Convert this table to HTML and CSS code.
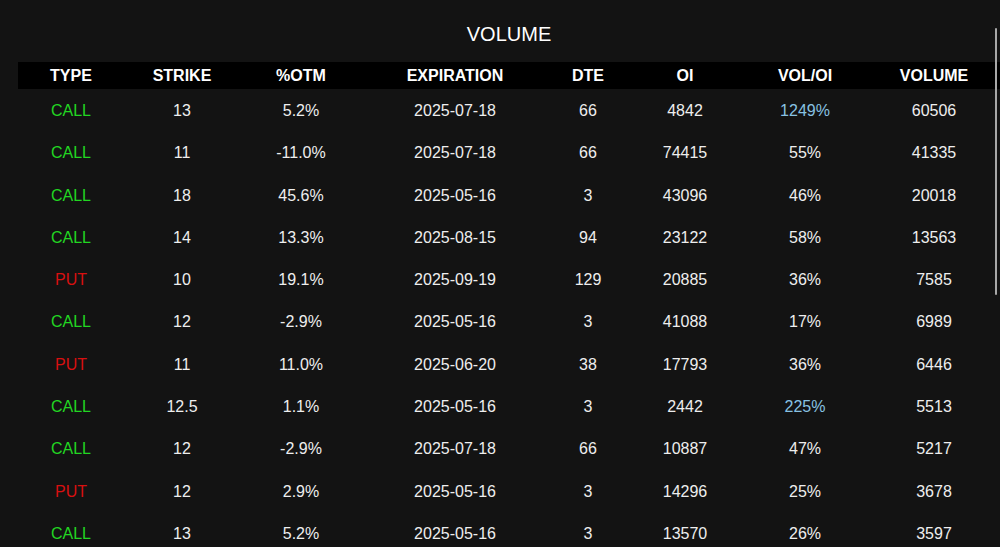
FILE: index.html
```html
<!DOCTYPE html>
<html>
<head>
<meta charset="utf-8">
<link rel="stylesheet" href="styles.css">
</head>
<body>
<div class="panel">
  <div class="title">VOLUME</div>
  <table class="grid">
    <colgroup>
      <col class="c-type"><col class="c-strike"><col class="c-otm"><col class="c-exp">
      <col class="c-dte"><col class="c-oi"><col class="c-ratio"><col class="c-vol">
    </colgroup>
    <thead>
      <tr><th>TYPE</th><th>STRIKE</th><th>%OTM</th><th>EXPIRATION</th><th>DTE</th><th>OI</th><th>VOL/OI</th><th>VOLUME</th></tr>
    </thead>
    <tbody>
      <tr><td class="call">CALL</td><td>13</td><td>5.2%</td><td>2025-07-18</td><td>66</td><td>4842</td><td class="hot">1249%</td><td>60506</td></tr>
      <tr><td class="call">CALL</td><td>11</td><td>-11.0%</td><td>2025-07-18</td><td>66</td><td>74415</td><td>55%</td><td>41335</td></tr>
      <tr><td class="call">CALL</td><td>18</td><td>45.6%</td><td>2025-05-16</td><td>3</td><td>43096</td><td>46%</td><td>20018</td></tr>
      <tr><td class="call">CALL</td><td>14</td><td>13.3%</td><td>2025-08-15</td><td>94</td><td>23122</td><td>58%</td><td>13563</td></tr>
      <tr><td class="put">PUT</td><td>10</td><td>19.1%</td><td>2025-09-19</td><td>129</td><td>20885</td><td>36%</td><td>7585</td></tr>
      <tr><td class="call">CALL</td><td>12</td><td>-2.9%</td><td>2025-05-16</td><td>3</td><td>41088</td><td>17%</td><td>6989</td></tr>
      <tr><td class="put">PUT</td><td>11</td><td>11.0%</td><td>2025-06-20</td><td>38</td><td>17793</td><td>36%</td><td>6446</td></tr>
      <tr><td class="call">CALL</td><td>12.5</td><td>1.1%</td><td>2025-05-16</td><td>3</td><td>2442</td><td class="hot">225%</td><td>5513</td></tr>
      <tr><td class="call">CALL</td><td>12</td><td>-2.9%</td><td>2025-07-18</td><td>66</td><td>10887</td><td>47%</td><td>5217</td></tr>
      <tr><td class="put">PUT</td><td>12</td><td>2.9%</td><td>2025-05-16</td><td>3</td><td>14296</td><td>25%</td><td>3678</td></tr>
      <tr><td class="call">CALL</td><td>13</td><td>5.2%</td><td>2025-05-16</td><td>3</td><td>13570</td><td>26%</td><td>3597</td></tr>
    </tbody>
  </table>
</div>
<div class="scroll-thumb"></div>
</body>
</html>
```
FILE: styles.css
```css
html, body {
  margin: 0;
  padding: 0;
  background: #131313;
  overflow: hidden;
  height: 547px;
}
body {
  font-family: "Liberation Sans", Arial, sans-serif;
  color: #eeeeee;
}
.panel {
  padding-left: 18px;
}
.title {
  text-align: center;
  font-size: 20px;
  line-height: 23px;
  padding-top: 23px;
  padding-bottom: 16px;
  color: #ffffff;
}
.grid {
  width: 982px;
  border-collapse: collapse;
  table-layout: fixed;
}
.c-type { width: 106px; }
.c-strike { width: 116px; }
.c-otm { width: 122px; }
.c-exp { width: 186px; }
.c-dte { width: 80px; }
.c-oi { width: 114px; }
.c-ratio { width: 126px; }
.c-vol { width: 132px; }
.grid th {
  background: #000000;
  color: #ffffff;
  font-weight: bold;
  font-size: 16px;
  height: 27px;
  padding: 0;
  text-align: center;
}
.grid td {
  font-size: 16px;
  line-height: 18px;
  padding: 13px 0 11.3px;
  text-align: center;
  color: #eeeeee;
}
.grid td.call { color: #22d622; }
.grid td.put { color: #d81010; }
.grid td.hot { color: #88c2e2; }
.scroll-thumb {
  position: absolute;
  left: 995px;
  top: 28px;
  width: 2px;
  height: 267px;
  background: #a8a8a8;
  border-radius: 1px;
}
```
